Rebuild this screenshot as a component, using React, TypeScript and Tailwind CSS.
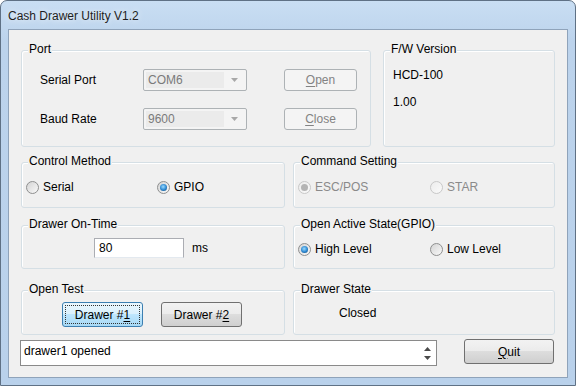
import type { ReactNode } from "react";

const FONT = "font-['Liberation_Sans',Arial,sans-serif]";

function Group({
  title,
  className,
  children,
}: {
  title: string;
  className: string;
  children?: ReactNode;
}) {
  return (
    <div
      className={`relative rounded-[3px] border border-[#d5dfe5] shadow-[inset_1px_1px_0_#ffffff] ${className}`}
    >
      <span className="absolute -top-[9px] left-[6px] bg-[#f0f0f0] px-[1px] leading-[14px]">
        {title}
      </span>
      {children}
    </div>
  );
}

function Radio({
  label,
  checked,
  disabled,
}: {
  label: string;
  checked?: boolean;
  disabled?: boolean;
}) {
  return (
    <div className="flex h-[14px] items-center">
      <span
        className={`flex h-[13px] w-[13px] items-center justify-center rounded-full border ${
          disabled
            ? "border-[#c8c8c8] bg-[linear-gradient(135deg,#ececec,#fafafa)]"
            : "border-[#8e8f8f] bg-[linear-gradient(135deg,#d4d4d4,#f9f9f9)]"
        }`}
      >
        {checked && (
          <span
            className={`h-[7px] w-[7px] rounded-full ${
              disabled
                ? "bg-[#b4b4b4]"
                : "bg-[radial-gradient(circle_at_45%_40%,#9adbff,#2a86d0_55%,#123e66)]"
            }`}
          />
        )}
      </span>
      <span className={`ml-[4px] ${disabled ? "text-[#8a8a8a]" : ""}`}>{label}</span>
    </div>
  );
}

function Combo({ value }: { value: string }) {
  return (
    <div className="flex h-[22px] w-[104px] items-center rounded-[2px] border border-[#adb2b5] bg-[#f4f4f4] p-[2px]">
      <div className="flex h-full flex-1 items-center bg-[#ebebeb] pl-[2px] text-[#7a7a7a]">
        {value}
      </div>
      <div className="flex w-[20px] justify-center">
        <svg width="7" height="4" viewBox="0 0 7 4">
          <path d="M0 0h7L3.5 4z" fill="#a8a8a8" />
        </svg>
      </div>
    </div>
  );
}

function DisabledButton({ first, rest }: { first: string; rest: string }) {
  return (
    <div className="ml-[37px] flex h-[22px] w-[73px] items-center justify-center rounded-[3px] border border-[#adb2b5] bg-[#f4f4f4] text-[#838383]">
      <span>
        <u className="underline-offset-[2px]">{first}</u>
        {rest}
      </span>
    </div>
  );
}

function PushButton({
  before = "",
  hot,
  after = "",
  focused,
  className,
}: {
  before?: string;
  hot: string;
  after?: string;
  focused?: boolean;
  className: string;
}) {
  return (
    <div
      className={`flex items-center justify-center rounded-[3px] border p-[2px] ${
        focused
          ? "border-[#3c7fb1] bg-[linear-gradient(#eaf6fd,#d9f0fc_50%,#bee6fd_50%,#a7d9f5)]"
          : "border-[#707070] bg-[linear-gradient(#f2f2f2,#ebebeb_50%,#dddddd_50%,#cfcfcf)]"
      } ${className}`}
    >
      <div
        className={`flex h-full w-full items-center justify-center ${
          focused ? "border border-dotted border-[#333]" : ""
        }`}
      >
        <span>
          {before}
          <u className="underline-offset-[2px]">{hot}</u>
          {after}
        </span>
      </div>
    </div>
  );
}

export default function App() {
  return (
    <div
      className={`${FONT} flex h-[386px] w-[576px] flex-col rounded-t-[7px] border border-[#5f7185] bg-[linear-gradient(#c9def3,#bcd3ec_40px,#b9d1eb)] text-[12px] leading-[14px] text-black`}
    >
      {/* Title bar */}
      <div className="flex h-[28px] items-center pl-[7px] pt-[1px]">
        <span className="text-[12px] text-[#1e1e1e] [text-shadow:0_0_6px_#ffffff]">
          Cash Drawer Utility V1.2
        </span>
      </div>

      {/* Client area */}
      <div className="flex-1 px-[7px] pb-[7px]">
        <div className="flex h-full flex-col border border-[#8fa3ba] bg-[#f0f0f0] px-[12px] pt-[20px]">
          {/* Port / FW */}
          <div className="flex gap-[12px]">
            <Group title="Port" className="h-[97px] w-[350px] pl-[18px] pt-[18px]">
              <div className="flex h-[22px] items-center">
                <span className="w-[103px]">Serial Port</span>
                <Combo value="COM6" />
                <DisabledButton first="O" rest="pen" />
              </div>
              <div className="mt-[17px] flex h-[22px] items-center">
                <span className="w-[103px]">Baud Rate</span>
                <Combo value="9600" />
                <DisabledButton first="C" rest="lose" />
              </div>
            </Group>
            <Group title="F/W Version" className="h-[97px] w-[172px] pl-[9px] pt-[17px]">
              <div>HCD-100</div>
              <div className="mt-[13px]">1.00</div>
            </Group>
          </div>

          {/* Control method / Command setting */}
          <div className="mt-[15px] flex gap-[8px]">
            <Group title="Control Method" className="flex h-[46px] w-[264px] pl-[4px] pt-[17px]">
              <div className="w-[131px]">
                <Radio label="Serial" />
              </div>
              <Radio label="GPIO" checked />
            </Group>
            <Group title="Command Setting" className="flex h-[46px] w-[262px] pl-[4px] pt-[17px]">
              <div className="w-[132px]">
                <Radio label="ESC/POS" checked disabled />
              </div>
              <Radio label="STAR" disabled />
            </Group>
          </div>

          {/* On-time / Active state */}
          <div className="mt-[17px] flex gap-[8px]">
            <Group title="Drawer On-Time" className="flex h-[44px] w-[264px] items-start pl-[72px] pt-[12px]">
              <div className="flex h-[20px] w-[90px] items-center border border-[#abadb3] border-b-[#e3e9ef] bg-white pl-[4px]">
                80
              </div>
              <span className="ml-[8px] mt-[3px]">ms</span>
            </Group>
            <Group title="Open Active State(GPIO)" className="flex h-[44px] w-[262px] pl-[4px] pt-[16px]">
              <div className="w-[132px]">
                <Radio label="High Level" checked />
              </div>
              <Radio label="Low Level" />
            </Group>
          </div>

          {/* Open test / Drawer state */}
          <div className="mt-[21px] flex gap-[8px]">
            <Group title="Open Test" className="flex h-[45px] w-[264px] items-start gap-[18px] pl-[40px] pt-[11px]">
              <PushButton before="Drawer #" hot="1" focused className="h-[25px] w-[81px]" />
              <PushButton before="Drawer #" hot="2" className="h-[25px] w-[81px]" />
            </Group>
            <Group title="Drawer State" className="h-[45px] w-[262px] pl-[45px] pt-[15px]">
              <div>Closed</div>
            </Group>
          </div>

          {/* Log + Quit */}
          <div className="mt-[5px] flex items-start">
            <div className="ml-[-1px] flex h-[26px] w-[417px] border border-[#8a8a8a] bg-white">
              <div className="flex-1 pl-[3px] pt-[3px]">drawer1 opened</div>
              <div className="flex w-[16px] flex-col items-center justify-center gap-[5px] pr-[1px]">
                <svg width="7" height="4" viewBox="0 0 7 4">
                  <path d="M0 4h7L3.5 0z" fill="#4a4a4a" />
                </svg>
                <svg width="7" height="4" viewBox="0 0 7 4">
                  <path d="M0 0h7L3.5 4z" fill="#4a4a4a" />
                </svg>
              </div>
            </div>
            <PushButton hot="Q" after="uit" className="ml-[27px] mt-[-1px] h-[25px] w-[90px]" />
          </div>
        </div>
      </div>
    </div>
  );
}
